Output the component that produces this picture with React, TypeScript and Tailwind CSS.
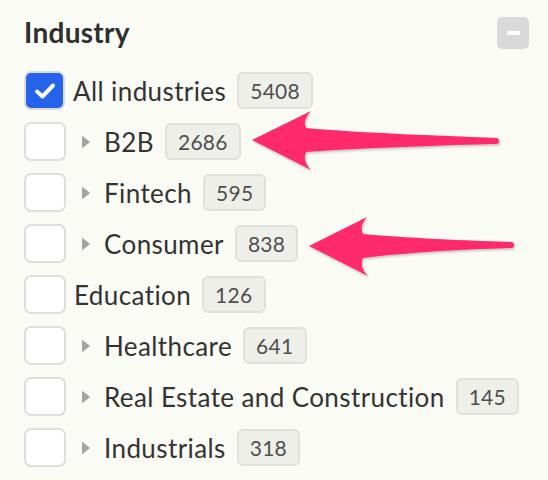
import React from 'react';

type Item = { label: string; count: number; checked?: boolean; caret?: boolean };

const items: Item[] = [
  { label: 'All industries', count: 5408, checked: true },
  { label: 'B2B', count: 2686, caret: true },
  { label: 'Fintech', count: 595, caret: true },
  { label: 'Consumer', count: 838, caret: true },
  { label: 'Education', count: 126 },
  { label: 'Healthcare', count: 641, caret: true },
  { label: 'Real Estate and Construction', count: 145, caret: true },
  { label: 'Industrials', count: 318, caret: true },
];

const Checkbox: React.FC<{ checked?: boolean }> = ({ checked }) =>
  checked ? (
    <div className="w-[41px] h-[39px] shrink-0 rounded-[7px] border-2 border-[#dcdcdc] bg-[#2563eb] flex items-center justify-center">
      <svg width="22" height="18" viewBox="0 0 22 18">
        <path d="M3 9.5 L8.5 14.5 L19 3.5" fill="none" stroke="white" strokeWidth="4" strokeLinecap="round" strokeLinejoin="round" />
      </svg>
    </div>
  ) : (
    <div className="w-[42px] h-[39px] shrink-0 rounded-[7px] border-2 border-[#dedede] bg-white" />
  );

const Caret = () => (
  <svg width="10" height="14" viewBox="0 0 10 14" className="ml-[15px] mr-[13px] shrink-0">
    <path d="M1.5 1.5 L8.5 7 L1.5 12.5 Z" fill="#a3a3a3" stroke="#a3a3a3" strokeWidth="1" strokeLinejoin="round" />
  </svg>
);

const App: React.FC = () => {
  return (
    <div className="relative w-[548px] h-[480px] overflow-hidden bg-[#fbfbf6] text-[#333] font-['Lato',sans-serif]">
      <div className="pl-[24px] pr-[19px] pt-[17px]">
        <div className="flex items-center justify-between h-[32px]">
          <h2 className="text-[28px] font-bold leading-none tracking-[0.3px] text-[#2f2f2f] -mt-[3px]">Industry</h2>
          <button className="w-[32px] h-[32px] rounded-[5px] bg-[#d9d9d9] flex items-center justify-center">
            <span className="block w-[13px] h-[4px] rounded-[1px] bg-white" />
          </button>
        </div>

        <div className="mt-[22px] flex flex-col gap-[12px]">
          {items.map((it) => (
            <div key={it.label} className="flex items-center h-[39px]">
              <Checkbox checked={it.checked} />
              {it.caret ? <Caret /> : <span className="w-[8px] shrink-0" />}
              <span className="text-[26px] leading-none tracking-[0.4px] whitespace-nowrap">{it.label}</span>
              <span className="ml-[11px] h-[37px] px-[11px] flex items-center rounded-[6px] border-2 border-[#e0e0dc] bg-[#efefea] text-[21px] tracking-[0.3px] text-[#4f4f4f] leading-none">
                {it.count}
              </span>
            </div>
          ))}
          <div className="flex items-center h-[39px] pl-[64px] text-[22px] text-[#2b6cb0]">Show all</div>
        </div>
      </div>

      <svg className="absolute inset-0 pointer-events-none" width="548" height="480" viewBox="0 0 548 480">
        <defs>
          <filter id="sh" x="-10%" y="-30%" width="120%" height="160%">
            <feDropShadow dx="1" dy="1.5" stdDeviation="1.2" floodColor="#000" floodOpacity="0.25" />
          </filter>
        </defs>
        <path
          d="M252,140 L311,111 Q302,120 306,128 C360,133 450,136 496,138 A3,3 0 0 1 496,144 C450,145 360,148 306,152 Q302,161 311,170 Z"
          fill="#ff2a6d"
          filter="url(#sh)"
        />
        <path
          d="M309,246 L367,217 Q359,226 363,234 C420,239 480,241 511,242 A3,3 0 0 1 511,248 C480,249 420,251 363,258 Q359,267 368,276 Z"
          fill="#ff2a6d"
          filter="url(#sh)"
        />
      </svg>
    </div>
  );
};

export default App;
